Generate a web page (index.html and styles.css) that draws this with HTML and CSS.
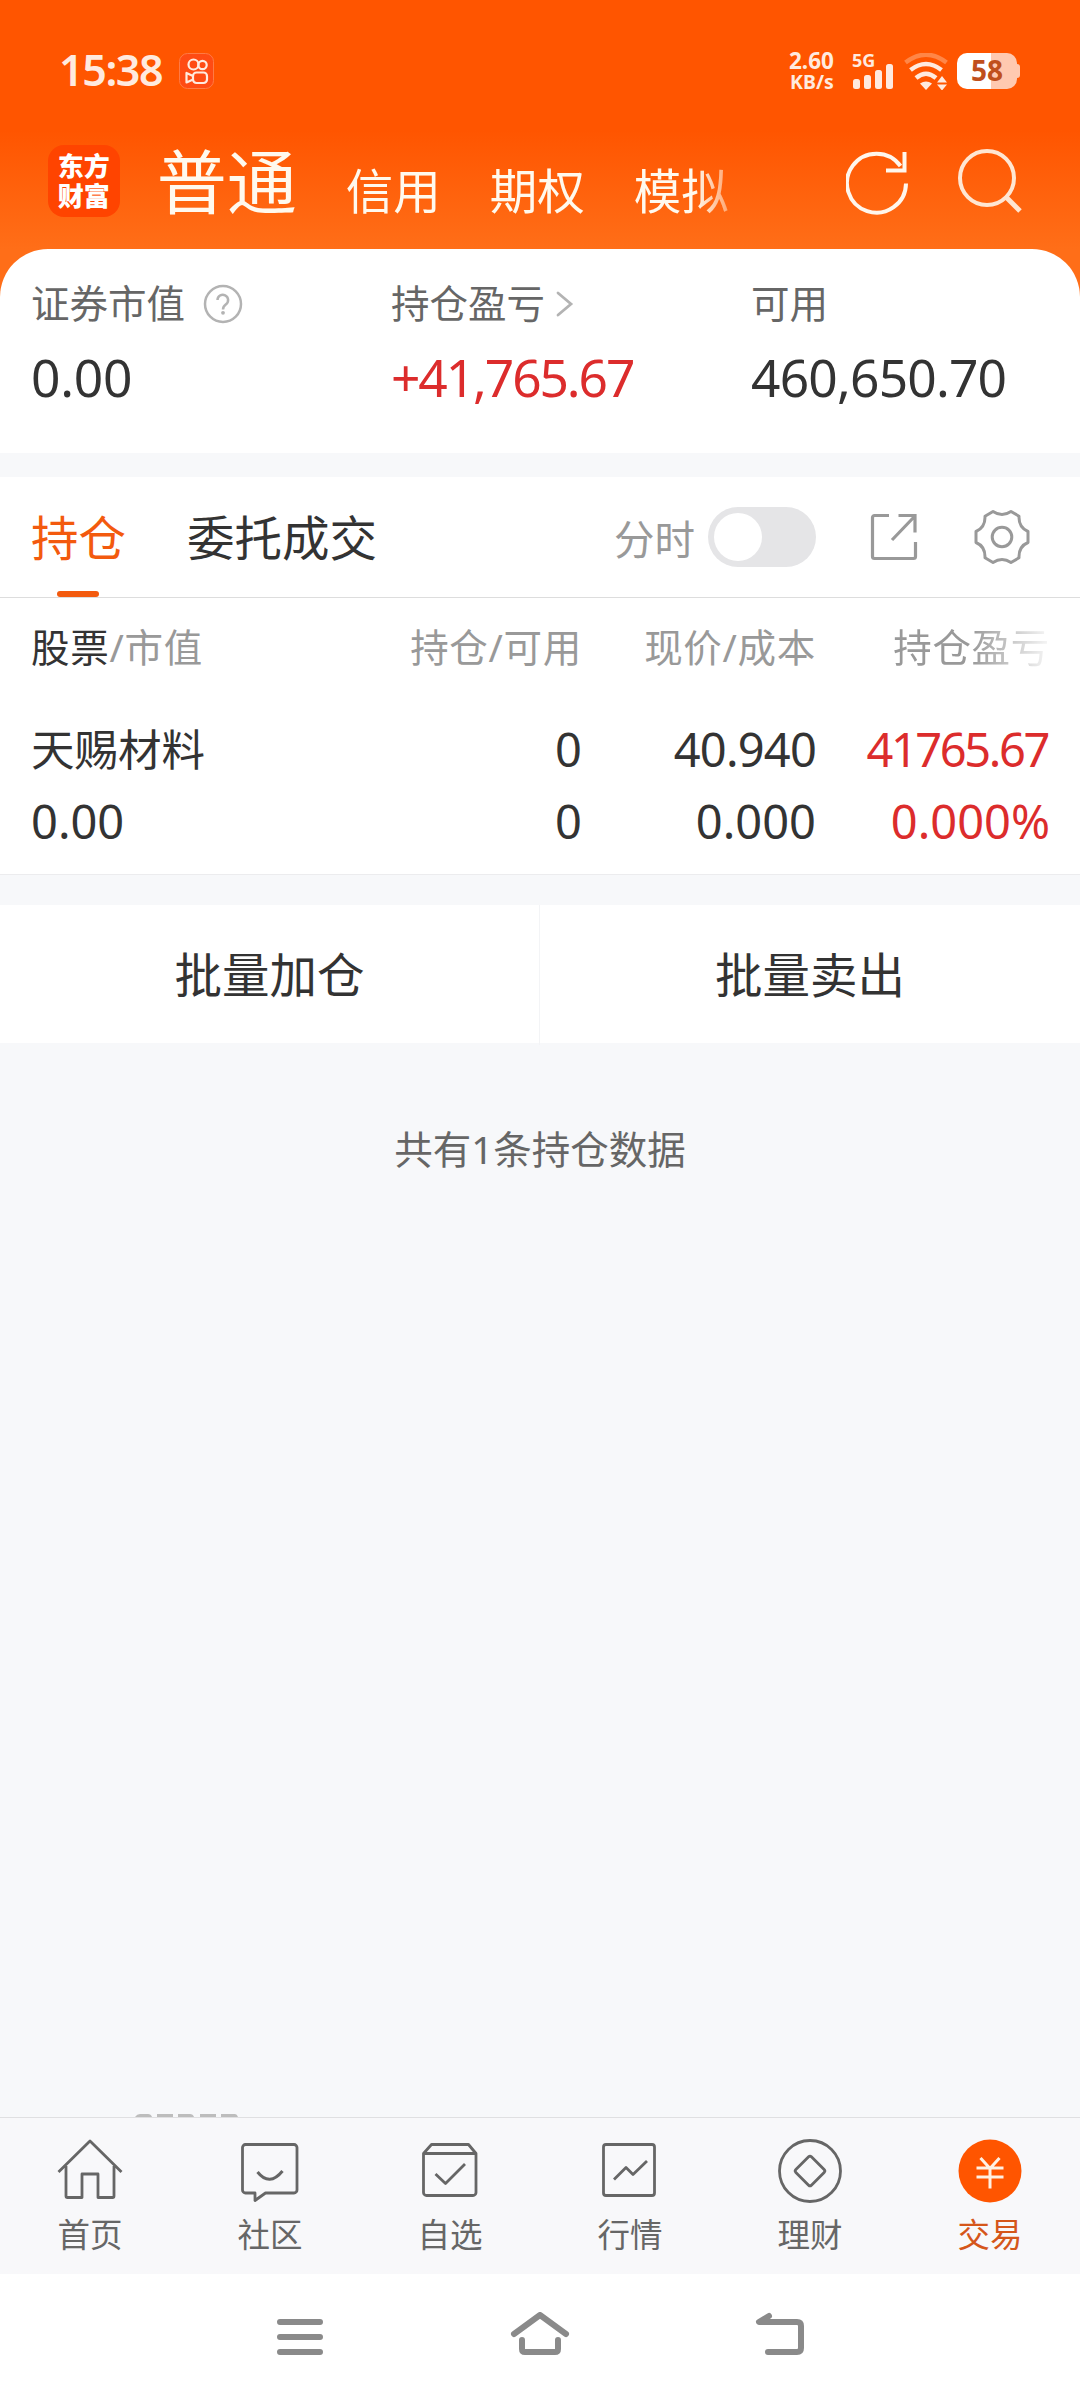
FILE: index.html
```html
<!DOCTYPE html>
<html lang="zh-CN">
<head>
    <meta charset="UTF-8">
    <meta name="viewport" content="width=device-width, initial-scale=1.0">
    <title>交易</title>
    <link rel="stylesheet" href="styles.css">
</head>
<body>
    <header class="header">
        <div class="status-bar">
            <span class="time">15:38</span>
            <svg class="app-badge" width="36" height="36" viewBox="0 0 36 36" fill="none" stroke="#ffeadf">
                <rect x="0.5" y="0.5" width="34" height="35" rx="8" fill="#ff4b14" stroke="#ff7a45" stroke-width="1"/>
                <circle cx="14.5" cy="11.5" r="5" stroke-width="2.2"/>
                <circle cx="23.5" cy="12" r="4.2" stroke-width="2.2"/>
                <rect x="14" y="19.500" width="14" height="10.500" rx="3.500" stroke-width="2.2"/>
                <path d="M14 23l-6.500-3v9.500l6.500-3" stroke-width="2.2" stroke-linejoin="round"/>
            </svg>
            <div class="status-right">
                <div class="speed"><span>2.60</span><span class="unit">KB/s</span></div>
                <div class="signal">
                    <span>5G</span>
                    <svg width="41" height="26" viewBox="0 0 41 26" fill="#ffeadf">
                        <rect x="0" y="15" width="7" height="10" rx="2.500"/>
                        <rect x="11" y="11" width="7" height="14" rx="2.500"/>
                        <rect x="22" y="6" width="7" height="19" rx="2.500"/>
                        <rect x="33" y="0" width="7" height="25" rx="2.500"/>
                    </svg>
                </div>
                <svg class="wifi" width="44" height="37" viewBox="0 0 44 37" fill="none" stroke="#ffeadf" stroke-width="4.500">
                    <path d="M1.500 9.500Q22-6 42.500 9.500" stroke="#ff8647"/>
                    <path d="M6.500 17Q22 5 37.500 17"/>
                    <path d="M12 25Q22 16.500 32 25"/>
                    <path d="M16 30.500Q22 26.500 28 30.500L22 37z" fill="#ffeadf" stroke="none"/>
                    <path d="M33 29.500l5-6.500 5 6.500zM33 31.500l5 6 5-6z" fill="#ffeadf" stroke="none"/>
                </svg>
                <div class="battery"><span>58</span></div>
            </div>
        </div>
        <div class="account-bar">
            <div class="logo"><span>东方</span><span>财富</span></div>
            <nav class="accounts">
                <span class="current">普通</span>
                <span>信用</span>
                <span>期权</span>
                <span>模拟</span>
            </nav>
            <svg class="refresh" width="64" height="66" viewBox="0 0 64 66" fill="none" stroke="#fff6ec" stroke-width="4">
                <path d="M60 34.500A29.500 29.500 0 1 1 54.500 17"/>
                <path d="M58.500 3v18.500H40"/>
            </svg>
            <svg class="search" width="64" height="66" viewBox="0 0 64 66" fill="none" stroke="#ffe6d2" stroke-width="4">
                <circle cx="29" cy="29" r="27"/>
                <path d="M48 48l14 14" stroke-width="5"/>
            </svg>
        </div>
    </header>

    <section class="summary">
        <div class="summary-item">
            <div class="label">证券市值
                <svg class="help" width="40" height="40" viewBox="0 0 40 40" fill="none" stroke="#b3b3b3" stroke-width="2.500">
                    <circle cx="20" cy="20" r="18"/>
                    <path d="M14.500 16a5.300 5.300 0 1 1 8.600 4.200C21 21.800 20 22.500 20 25.500"/>
                    <circle cx="20" cy="28.800" r="1.900" fill="#b3b3b3" stroke="none"/>
                </svg>
            </div>
            <div class="value">0.00</div>
        </div>
        <div class="summary-item">
            <div class="label">持仓盈亏
                <svg class="chevron" width="18" height="28" viewBox="0 0 18 28" fill="none" stroke="#b3b3b3" stroke-width="2.800" stroke-linecap="round">
                    <path d="M2 3l13 11L2 25"/>
                </svg>
            </div>
            <div class="value profit">+41,765.67</div>
        </div>
        <div class="summary-item">
            <div class="label">可用</div>
            <div class="value money">460,650.70</div>
        </div>
    </section>

    <section class="holdings">
        <div class="tabs">
            <span class="tab active">持仓</span>
            <span class="tab">委托成交</span>
            <div class="tools">
                <span class="tool-label">分时</span>
                <div class="toggle"></div>
                <svg class="export" width="48" height="48" viewBox="0 0 48 48" fill="none" stroke="#999" stroke-width="3.200">
                    <path d="M19 2.500H4.500a2 2 0 0 0-2 2v39a2 2 0 0 0 2 2h39a2 2 0 0 0 2-2V29M28.500 2.500h16.500v17M44 4L22 27"/>
                </svg>
                <svg class="gear" width="56" height="56" viewBox="0 0 56 56" fill="none" stroke="#999" stroke-width="3" stroke-linejoin="round">
                    <path d="M19 2.500Q28 8.500 37 2.500L45 7.200Q44.500 18.500 54 22.500V33.500Q44.500 37.500 45 48.800L37 53.500Q28 47.500 19 53.500L11 48.800Q11.500 37.500 2 33.500V22.500Q11.500 18.500 11 7.200Z"/>
                    <circle cx="28" cy="28" r="9.800"/>
                </svg>
            </div>
        </div>
        <div class="row head">
            <span class="name"><b>股票</b>/市值</span>
            <span>持仓/可用</span>
            <span>现价/成本</span>
            <span class="fade">持仓盈亏</span>
        </div>
        <div class="row first">
            <span class="name stock">天赐材料</span>
            <span>0</span>
            <span class="price">40.940</span>
            <span class="profit tight">41765.67</span>
        </div>
        <div class="row second">
            <span class="name">0.00</span>
            <span>0</span>
            <span>0.000</span>
            <span class="profit">0.000%</span>
        </div>
    </section>

    <div class="batch">
        <div>批量加仓</div>
        <div>批量卖出</div>
    </div>

    <main class="content">
        <p>共有1条持仓数据</p>
        <svg class="peek" width="104" height="3" viewBox="0 0 104 3" fill="#bdbdbd">
            <path d="M0 3Q2 0 5 0H13Q16 0 17 3zM22 0h16v3H22zM43 0H55Q58 0 59 3H43zM65 0h16v3H65zM86 0H100Q102 0 103 3H86z"/>
        </svg>
    </main>

    <nav class="tab-bar">
        <a class="tab-item">
            <svg width="66" height="66" viewBox="0 0 66 66">
                <path d="M1.500 34L33 3 64.500 34M9 28v30a1.500 1.500 0 0 0 1.500 1.500H25V36h16v23.500h14.500A1.500 1.500 0 0 0 57 58V28"/>
            </svg>
            <span>首页</span>
        </a>
        <a class="tab-item">
            <svg width="66" height="66" viewBox="0 0 66 66">
                <path d="M8 6.500H57a3 3 0 0 1 3 3V52a3 3 0 0 1-3 3H28.500L18 62.500V55H8.500a3 3 0 0 1-3-3V9.500a3 3 0 0 1 3-3z"/>
                <path d="M20.500 34q12 15 25-1" stroke-width="3"/>
            </svg>
            <span>社区</span>
        </a>
        <a class="tab-item">
            <svg width="66" height="66" viewBox="0 0 66 66">
                <path d="M6.500 15.500v39a3 3 0 0 0 3 3H56a3 3 0 0 0 3-3v-39L51.500 6.500H14.500zM6.500 15.500H59M18.500 36l10 9.500 19.500-19.500"/>
            </svg>
            <span>自选</span>
        </a>
        <a class="tab-item">
            <svg width="66" height="66" viewBox="0 0 66 66">
                <rect x="6.500" y="6.500" width="51" height="51" rx="2.500"/>
                <path d="M17 41.500L29 29.500l7 7 14-13.500"/>
            </svg>
            <span>行情</span>
        </a>
        <a class="tab-item">
            <svg width="66" height="66" viewBox="0 0 66 66">
                <circle cx="33" cy="33" r="30.500"/>
                <rect x="22" y="22" width="22" height="22" rx="2" transform="rotate(45 33 33)"/>
            </svg>
            <span>理财</span>
        </a>
        <a class="tab-item active">
            <svg width="66" height="66" viewBox="0 0 66 66">
                <circle class="coin" cx="33" cy="33" r="31.500"/>
                <path class="yen" d="M23.500 20L33 30.500 42.500 20M33 29v21.500M19.500 30h27M19.500 39h27"/>
            </svg>
            <span>交易</span>
        </a>
    </nav>

    <div class="system-nav">
        <svg width="60" height="50" viewBox="0 0 60 50">
            <path d="M10 10h40M10 25h40M10 40h40"/>
        </svg>
        <svg width="60" height="50" viewBox="0 0 60 50">
            <path d="M4 22L30 3 56 22M12 28v9q0 3 3 3h30q3 0 3-3v-9"/>
        </svg>
        <svg width="60" height="50" viewBox="0 0 60 50">
            <path d="M19 4L9 10h38q4 0 4 4v22q0 4-4 4H18"/>
        </svg>
    </div>
</body>
</html>
```
FILE: styles.css
```css
* {
    box-sizing: border-box;
}

body {
    margin: 0;
    width: 1080px;
    height: 2400px;
    overflow: hidden;
    display: flex;
    flex-direction: column;
    font-family: "Noto Sans", "Noto Sans CJK SC", sans-serif;
    color: #333;
    background-color: #f7f8fa;
}

svg {
    display: block;
    flex: none;
}

/* Header */
.header {
    height: 300px;
    flex: none;
    background: linear-gradient(#ff5500 130px, #ff6e18 249px);
}

.status-bar {
    display: flex;
    height: 107px;
    padding: 53px 60px 0 59px;
    color: #ffeadf;
}

.time {
    width: 120px;
    font-size: 43px;
    font-weight: 600;
    line-height: 34px;
    letter-spacing: -1.4px;
}

.status-right {
    display: flex;
    margin-left: auto;
    font-weight: 700;
}

.speed {
    width: 62px;
    display: flex;
    flex-direction: column;
    font-size: 22.5px;
    line-height: 16px;
}

.speed .unit {
    font-size: 19.5px;
    line-height: 25px;
    padding-left: 1px;
}

.signal {
    width: 53px;
    padding-left: 1px;
}

.signal span {
    display: block;
    font-size: 18px;
    line-height: 14px;
    height: 11px;
}

.signal svg {
    margin-left: 1px;
}

.wifi {
    margin-right: 9px;
}

.battery {
    position: relative;
    width: 60px;
    height: 36px;
    margin-right: 3px;
    border-radius: 10px;
    background: linear-gradient(90deg, #fff 34px, #ffc9b0 34px);
    color: #c04f1c;
    font-size: 28px;
    line-height: 35px;
    text-align: center;
}

.battery::after {
    content: "";
    position: absolute;
    right: -3px;
    top: 11px;
    width: 3px;
    height: 14px;
    border-radius: 0 3px 3px 0;
    background-color: #ffc9b0;
}

.account-bar {
    display: flex;
    padding: 38px 58px 0 48px;
}

.logo {
    width: 72px;
    height: 72px;
    padding-top: 6px;
    border-radius: 16px;
    background-color: #ff4400;
    display: flex;
    flex-direction: column;
    align-items: center;
    color: #fff;
    font-size: 26px;
    font-weight: 900;
    line-height: 30px;
}

.accounts {
    width: 697px;
    display: flex;
    align-items: baseline;
    gap: 49px;
    padding-left: 37px;
    color: #fff9ee;
    font-size: 47.5px;
    line-height: 75px;
    -webkit-mask-image: linear-gradient(90deg, #000 575px, transparent 635px);
    mask-image: linear-gradient(90deg, #000 575px, transparent 635px);
}

.accounts .current {
    font-size: 70px;
}

.refresh {
    margin: 4px 48px 0 32px;
}

.search {
    margin-top: 4px;
}

/* Account summary */
.summary {
    height: 204px;
    flex: none;
    margin-top: -51px;
    padding-top: 32px;
    display: grid;
    grid-template-columns: repeat(3, 360px);
    background-color: #fff;
    border-radius: 48px 48px 0 0;
}

.summary-item {
    padding-left: 31px;
}

.label {
    display: flex;
    align-items: center;
    height: 44px;
    font-size: 38.5px;
    line-height: 44px;
    color: #666;
}

.help {
    margin: 2px 0 0 18px;
}

.chevron {
    margin: 1px 0 0 11px;
}

.value {
    margin-top: 22px;
    font-size: 51.5px;
    line-height: 60px;
    letter-spacing: -0.2px;
}

.value.profit {
    letter-spacing: -2.1px;
}

.value.money {
    letter-spacing: -0.8px;
}

.profit {
    color: #dc2c2c;
}

/* Holdings */
.holdings {
    height: 398px;
    flex: none;
    margin-top: 24px;
    background-color: #fff;
    border-bottom: 1px solid #ececee;
}

.tabs {
    display: flex;
    height: 121px;
    padding-left: 31px;
    border-bottom: 1px solid #ddd;
}

.tab {
    position: relative;
    margin-right: 61px;
    font-size: 47.5px;
    line-height: 122px;
}

.tab.active {
    color: #f35a0e;
}

.tab.active::after {
    content: "";
    position: absolute;
    left: 26px;
    bottom: 0;
    width: 42px;
    height: 6px;
    border-radius: 3px;
    background-color: #f35a0e;
}

.tools {
    display: flex;
    align-items: center;
    margin-left: auto;
    padding-right: 50px;
}

.tool-label {
    font-size: 40.5px;
    color: #999;
}

.toggle {
    width: 108px;
    height: 60px;
    margin-left: 13px;
    padding: 6px;
    border-radius: 30px;
    background-color: #e5e5e7;
}

.toggle::before {
    content: "";
    display: block;
    width: 48px;
    height: 48px;
    border-radius: 50%;
    background-color: #fff;
}

.export {
    margin-left: 54px;
}

.gear {
    margin-left: 56px;
}

.row {
    display: grid;
    grid-template-columns: 250px 301px 234px 234px;
    padding-left: 31px;
    font-size: 47px;
    text-align: right;
}

.row .name {
    text-align: left;
}

.row .stock {
    font-size: 43.5px;
}

.head {
    height: 100px;
    font-size: 38.5px;
    line-height: 98px;
    letter-spacing: 0.7px;
    color: #999;
}

.head b {
    font-weight: 400;
    color: #333;
}

.head .fade {
    -webkit-mask-image: linear-gradient(90deg, #000 155px, transparent 240px);
    mask-image: linear-gradient(90deg, #000 155px, transparent 240px);
}

.first {
    height: 72px;
    margin-top: 16px;
    line-height: 71px;
}

.second {
    height: 72px;
    line-height: 71px;
}

.price {
    letter-spacing: -0.8px;
}

.tight {
    letter-spacing: -2.4px;
    margin-right: 2px;
}

.batch {
    display: grid;
    grid-template-columns: 1fr 1fr;
    height: 138px;
    flex: none;
    margin-top: 30px;
    background-color: #fff;
    font-size: 47.5px;
    line-height: 140px;
    text-align: center;
}

.batch div:first-child {
    border-right: 1px solid #f3f4f6;
}

.content {
    flex: 1;
    display: flex;
    flex-direction: column;
}

.content p {
    margin: 81px 0 0;
    font-size: 38.5px;
    line-height: 50px;
    text-align: center;
    color: #666;
}

.peek {
    margin: auto 0 0 135px;
}

/* Bottom tab bar */
.tab-bar {
    display: flex;
    height: 157px;
    flex: none;
    border-top: 1px solid #e0e0e2;
    background-color: #f8f8fa;
}

.tab-item {
    width: 180px;
    padding-top: 20px;
    display: flex;
    flex-direction: column;
    align-items: center;
    color: #666;
    font-size: 32.5px;
    line-height: 44px;
}

.tab-item svg {
    margin-bottom: 9px;
    fill: none;
    stroke: #666;
    stroke-width: 2.8;
    stroke-linejoin: round;
}

.tab-item.active {
    color: #d5561a;
}

.tab-item .coin {
    fill: #ff5500;
    stroke: none;
}

.tab-item .yen {
    stroke: #fff0e2;
    stroke-width: 3;
}

.system-nav {
    display: flex;
    justify-content: center;
    gap: 180px;
    height: 126px;
    flex: none;
    padding-top: 38px;
    background-color: #fff;
}

.system-nav svg {
    fill: none;
    stroke: #8a8a8a;
    stroke-width: 6;
    stroke-linecap: round;
    stroke-linejoin: round;
}
```
